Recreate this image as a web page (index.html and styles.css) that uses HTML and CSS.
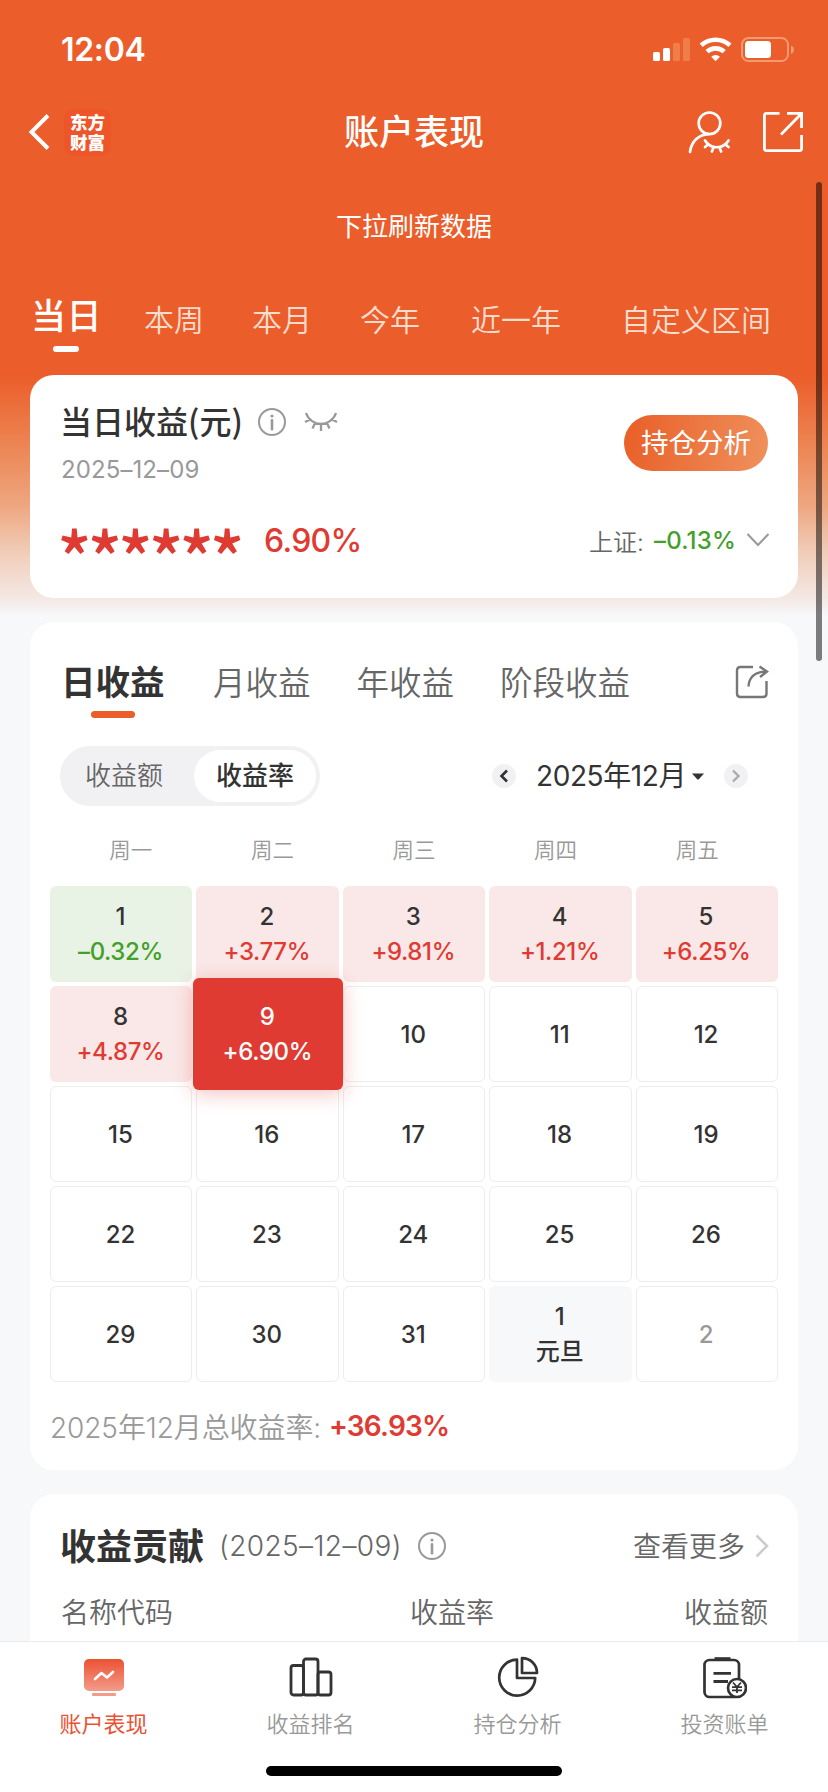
FILE: index.html
```html
<!DOCTYPE html>
<html lang="zh-CN">
<head>
<meta charset="utf-8">
<title>账户表现</title>
<link rel="stylesheet" href="styles.css">
</head>
<body>
<div class="screen">
  <header class="hero">
    <div class="status">
      <span class="time">12:04</span>
      <svg class="status-icons" width="144" height="28" viewBox="0 0 144 28" fill="#fff">
        <rect x="1" y="16" width="7" height="9" rx="1.6"/>
        <rect x="11" y="12" width="7" height="13" rx="1.6"/>
        <rect x="21" y="7" width="7" height="18" rx="1.6" fill="#f07e4a"/>
        <rect x="31" y="2" width="7" height="23" rx="1.6" fill="#f07e4a"/>
        <g fill="none" stroke="#fff" stroke-width="4.6">
          <path d="M49.2 9.3a21.5 21.5 0 0 1 28.8 0"/>
          <path d="M55 15.6a13 13 0 0 1 17.200 0"/>
        </g>
        <path d="M59.200 20.700a6.600 6.600 0 0 1 8.800 0L63.600 25.200z"/>
        <rect x="90" y="2" width="46" height="23" rx="6.500" fill="none" stroke="#f39a70" stroke-width="2"/>
        <rect x="93" y="5" width="26" height="17" rx="3.500"/>
        <path d="M139 9.500c4 1.500 4 7 0 8.500z" fill="#f39a70"/>
      </svg>
    </div>
    <div class="nav">
      <div class="nav-side">
        <svg width="24" height="40" viewBox="0 0 24 40" fill="none" stroke="#fff" stroke-width="4"><path d="M21 3.500 4.500 20 21 36.500"/></svg>
        <span class="logo"><span>东方</span><span>财富</span></span>
      </div>
      <h1 class="nav-title">账户表现</h1>
      <div class="nav-side nav-end">
        <svg width="44" height="44" viewBox="0 0 44 44" fill="none" stroke="#fff" stroke-width="2.700" stroke-linecap="round">
          <circle cx="22.500" cy="13.300" r="10.800"/>
          <path d="M3 42C4.500 31 12 24.500 21.500 24.100M18 30.500C23.500 39.500 36 39.500 41.500 30.500M21 34.500l-3 2.600M26.500 37.500l-1.600 4M32.500 37.500l1.600 4M38.500 34.500l3 2.600"/>
        </svg>
        <svg width="42" height="42" viewBox="0 0 42 42" fill="none" stroke="#fff" stroke-width="2.800">
          <path d="M17.500 2.400H4.400Q2.400 2.400 2.400 4.400V37.600Q2.400 39.600 4.400 39.600H37.600Q39.600 39.600 39.600 37.600V24M25 2.400H39.600V17M39 3 19 23.500"/>
        </svg>
      </div>
    </div>
    <div class="pull">下拉刷新数据</div>
    <nav class="range">
      <span class="range-on">当日</span><span>本周</span><span>本月</span><span>今年</span><span>近一年</span><span>自定义区间</span>
    </nav>
  </header>

  <main class="cards">
    <section class="card summary">
      <div class="sum-top">
        <div>
          <div class="sum-title"><h2>当日收益(元)</h2>
            <svg class="info" width="28" height="28" viewBox="0 0 28 28"><circle cx="14" cy="14" r="13" fill="none" stroke="#999" stroke-width="2"/><circle cx="14" cy="8" r="1.600" fill="#999"/><path d="M14 12.200v9" stroke="#999" stroke-width="2.600" stroke-linecap="round"/></svg>
            <svg width="34" height="22" viewBox="0 0 34 22" fill="none" stroke="#999" stroke-width="2.300"><path d="M2 2C7 16.500 27 16.500 32 2M6 8.500 1 11M11 12 8.500 17.500M17 13v7M23 12l2.500 5.500M28 8.500 33 11"/></svg>
          </div>
          <div class="sum-date">2025–12–09</div>
        </div>
        <button class="pill">持仓分析</button>
      </div>
      <div class="sum-row">
        <span class="stars">******</span><span class="sum-rate">6.90%</span>
        <span class="index-name">上证:</span><span class="index-val">–0.13%</span>
        <svg width="24" height="16" viewBox="0 0 24 16" fill="none" stroke="#999" stroke-width="2"><path d="M1.500 2 12 13 22.500 2"/></svg>
      </div>
    </section>

    <section class="card calendar">
      <div class="tabs">
        <span class="tab-on">日收益</span><span>月收益</span><span>年收益</span><span>阶段收益</span>
        <svg width="34" height="34" viewBox="0 0 34 34" fill="none" stroke="#777" stroke-width="2.400"><path d="M18 2H5.500Q2 2 2 5.500V28.500Q2 32 5.500 32H28Q31.500 32 31.500 28.500V16M13.500 21.500C14 12 20 7 31 6.500M24.500 1.500 32 6.500 25 12"/></svg>
      </div>
      <div class="controls">
        <div class="segment"><span>收益额</span><span class="seg-on">收益率</span></div>
        <div class="month">
          <span class="step"><svg width="10" height="14" viewBox="0 0 10 14" fill="none" stroke="#333" stroke-width="2.600"><path d="M8 1.500 2.500 7 8 12.500"/></svg></span>
          <span class="month-name">2025年12月</span>
          <svg class="caret" width="12" height="7" viewBox="0 0 12 7"><path d="M0 .500H12L7 6Q6 7 5 6Z" fill="#333"/></svg>
          <span class="step"><svg width="10" height="14" viewBox="0 0 10 14" fill="none" stroke="#aaa" stroke-width="2.400"><path d="M2 1.500 7.500 7 2 12.500"/></svg></span>
        </div>
      </div>
      <div class="week"><span>周一</span><span>周二</span><span>周三</span><span>周四</span><span>周五</span></div>
      <div class="grid">
        <div class="day down"><b>1</b><i>–0.32%</i></div><div class="day up"><b>2</b><i>+3.77%</i></div><div class="day up"><b>3</b><i>+9.81%</i></div><div class="day up"><b>4</b><i>+1.21%</i></div><div class="day up"><b>5</b><i>+6.25%</i></div>
        <div class="day up"><b>8</b><i>+4.87%</i></div><div class="day picked"><b>9</b><i>+6.90%</i></div><div class="day"><b>10</b></div><div class="day"><b>11</b></div><div class="day"><b>12</b></div>
        <div class="day"><b>15</b></div><div class="day"><b>16</b></div><div class="day"><b>17</b></div><div class="day"><b>18</b></div><div class="day"><b>19</b></div>
        <div class="day"><b>22</b></div><div class="day"><b>23</b></div><div class="day"><b>24</b></div><div class="day"><b>25</b></div><div class="day"><b>26</b></div>
        <div class="day"><b>29</b></div><div class="day"><b>30</b></div><div class="day"><b>31</b></div><div class="day holiday"><b>1</b><i>元旦</i></div><div class="day muted"><b>2</b></div>
      </div>
      <div class="total"><span class="total-label">2025年12月总收益率:</span><span class="total-val">+36.93%</span></div>
    </section>

    <section class="card contrib">
      <div class="con-top">
        <h2>收益贡献</h2><span class="con-date">(2025–12–09)</span>
        <svg class="info" width="28" height="28" viewBox="0 0 28 28"><circle cx="14" cy="14" r="13" fill="none" stroke="#999" stroke-width="2"/><circle cx="14" cy="8" r="1.600" fill="#999"/><path d="M14 12.200v9" stroke="#999" stroke-width="2.600" stroke-linecap="round"/></svg>
        <span class="more">查看更多</span>
        <svg width="14" height="24" viewBox="0 0 14 24" fill="none" stroke="#ccc" stroke-width="2.600"><path d="M1.500 1.500 12 12 1.500 22.500"/></svg>
      </div>
      <div class="con-head"><span>名称代码</span><span>收益率</span><span>收益额</span></div>
    </section>
  </main>

  <footer class="tabbar">
    <div class="items">
      <div class="item item-on">
        <svg width="44" height="44" viewBox="0 0 44 44"><defs><linearGradient id="g" x1="0" y1="0" x2="0" y2="1"><stop offset="0" stop-color="#ec5133"/><stop offset="1" stop-color="#f39c8a"/></linearGradient></defs><rect x="2" y="3" width="40" height="32" rx="5" fill="url(#g)"/><path d="M13 23 19.500 17 25 21.500 31 16" fill="none" stroke="#fff" stroke-width="2.600" stroke-linecap="round" stroke-linejoin="round"/><rect x="10" y="37" width="24" height="3" rx="1" fill="#f39c8a"/></svg>
        <span>账户表现</span>
      </div>
      <div class="item">
        <svg width="44" height="44" viewBox="0 0 44 44" fill="none" stroke="#333" stroke-width="2.800"><rect x="2" y="9.500" width="12.500" height="29.500" rx="2.500"/><rect x="14.500" y="3" width="14.500" height="36" rx="2.500"/><rect x="29" y="16" width="13" height="23" rx="2.500"/></svg>
        <span>收益排名</span>
      </div>
      <div class="item">
        <svg width="44" height="44" viewBox="0 0 44 44" fill="none" stroke="#333" stroke-width="2.700" stroke-linejoin="round"><path d="M21 3.600A18 18 0 1 0 39.200 22H21Z"/><path d="M26 2.200V17H41C41 8.500 34.500 2.200 26 2.200Z"/></svg>
        <span>持仓分析</span>
      </div>
      <div class="item">
        <svg width="44" height="44" viewBox="0 0 44 44" fill="none" stroke="#333" stroke-width="2.700"><rect x="1.500" y="4" width="34.500" height="37" rx="5"/><path d="M11.500 3H27.500" stroke-width="3.600"/><path d="M10.500 17.300H28M10.500 25.500H25" stroke-width="2.800"/><circle cx="34" cy="32" r="9" fill="#fff"/><path d="M30 26.500 34 31 38 26.500M34 31V37M29 31.200H39M29 34.300H39" stroke-width="1.800"/></svg>
        <span>投资账单</span>
      </div>
    </div>
    <div class="home"></div>
  </footer>
  <div class="scrollbar"></div>
</div>
</body>
</html>
```
FILE: styles.css
```css
* { box-sizing: border-box; margin: 0; padding: 0; }
body { font-family: Inter, "Noto Sans CJK SC", sans-serif; color: #333; background: #f7f8fa; }
svg { display: block; flex: none; }
h1, h2 { font-family: "Noto Sans CJK SC", sans-serif; }
b, i { font-weight: inherit; font-style: normal; }
span, button { white-space: nowrap; }

.screen {
  position: relative; display: flex; flex-direction: column;
  width: 828px; height: 1792px; overflow: hidden;
  background: linear-gradient(180deg, #eb5d2a 0, #eb5d2a 375px, #ec8250 440px, #eea67f 505px, #f1cdb9 553px, #f4e8e4 598px, #f7f8fa 616px);
}
.hero { flex: none; height: 375px; color: #fff; }

.status { display: flex; justify-content: space-between; height: 88px; padding: 36px 32px 0 61px; }
.time { font-size: 32px; line-height: 28px; font-weight: 600; letter-spacing: -.3px; }
.nav { display: flex; align-items: center; height: 88px; padding: 0 24px 0 27px; }
.nav-side { display: flex; align-items: center; width: 200px; gap: 13px; }
.nav-end { justify-content: flex-end; gap: 31px; }
.nav-title { flex: 1; padding: 0 3px 4px 0; text-align: center; font-size: 35px; line-height: 44px; font-weight: 500; }
.logo {
  display: flex; flex-direction: column; align-items: center; justify-content: center;
  width: 47px; height: 47px; border-radius: 10px; background: #ee5528;
  font: 800 17.5px/20px "Noto Sans CJK SC", sans-serif;
}
.pull { height: 102px; text-align: center; font-size: 26px; line-height: 102px; }
.range { display: flex; height: 85px; padding-left: 31px; font-size: 30px; line-height: 84px; color: #fbdccd; font-weight: 350; }
.range span { margin-right: 48px; }
.range span:nth-child(5) { margin-right: 60px; margin-left: 3px; }
.range .range-on { position: relative; margin-right: 42px; font-size: 35px; line-height: 77px; letter-spacing: .5px; color: #fff; font-weight: 500; }
.range-on::after { content: ""; position: absolute; left: 22px; top: 68px; width: 26px; height: 6px; border-radius: 3px; background: #fff; }

.cards { display: flex; flex-direction: column; gap: 24px; padding: 0 30px; }
.card { flex: none; border-radius: 24px; background: #fff; }

.summary { height: 223px; padding: 24px 28px 0 31px; }
.sum-top { display: flex; justify-content: space-between; height: 100px; padding-right: 2px; }
.sum-title { display: flex; align-items: center; height: 46px; }
.sum-title h2 { width: 181px; margin: 0 0 3px -1px; font-size: 32px; line-height: 43px; font-weight: 500; white-space: nowrap; }
.sum-title .info { margin: 0 18px 0 17px; }
.sum-date { font-size: 24px; line-height: 50px; color: #999; font-weight: 400; letter-spacing: .1px; }
.pill { margin-top: 16px; width: 144px; height: 56px; border: 0; border-radius: 28px; background: linear-gradient(100deg, #ea5e27, #ef915c); color: #fff; font: 400 27.5px/52px "Noto Sans CJK SC", sans-serif; padding-bottom: 4px; }
.sum-row { display: flex; align-items: center; height: 82px; }
.stars { width: 207px; height: 82px; margin-left: -4px; font: 500 72px/112px "Noto Sans CJK SC", sans-serif; letter-spacing: -4.3px; color: #df3b33; }
.sum-rate { flex: 1; font-size: 32px; color: #df3b33; font-weight: 500; letter-spacing: -.7px; }
.index-name { width: 65px; font-size: 24px; color: #666; font-weight: 350; }
.index-val { width: 92px; font-size: 24px; color: #43a02a; font-weight: 500; letter-spacing: .2px; }

.calendar { height: 848px; padding: 0 20px; }
.tabs { display: flex; align-items: center; height: 120px; padding: 0 9px 0 11px; font-size: 32.5px; color: #666; font-weight: 350; }
.tabs span { margin-right: 46px; margin-bottom: 4px; }
.tabs .tab-on { position: relative; margin-right: 48.5px; font-size: 34.5px; color: #333; font-weight: 600; }
.tab-on::after { content: ""; position: absolute; left: 50%; bottom: -13px; width: 44px; height: 7px; margin-left: -22px; border-radius: 3.5px; background: #eb5d2a; }
.tabs svg { margin-left: auto; }
.controls { display: flex; align-items: center; justify-content: space-between; height: 68px; padding: 0 30px 0 10px; }
.segment { display: flex; width: 260px; height: 60px; padding: 4px; border-radius: 30px; background: #f1f1f4; font-size: 26px; line-height: 52px; text-align: center; color: #666; font-weight: 350; }
.segment span { width: 120px; }
.segment .seg-on { width: 122px; margin-left: 10px; border-radius: 26px; background: #fff; color: #333; font-weight: 500; }
.month { display: flex; align-items: center; }
.step { display: flex; align-items: center; justify-content: center; width: 24px; height: 24px; border-radius: 50%; background: #f1f1f4; }
.month-name { margin-left: 20px; width: 156px; font-size: 28px; line-height: 40px; letter-spacing: -.4px; }
.caret { margin-right: 20px; }
.week { display: grid; grid-template-columns: repeat(5, 1fr); height: 76px; padding: 4px 10px 0 10px; text-align: center; font-size: 21.500px; line-height: 72px; color: #999; font-weight: 350; }
.grid { display: grid; grid-template-columns: repeat(5, 1fr); grid-auto-rows: 96px; gap: 4px; }
.day { display: flex; flex-direction: column; align-items: center; justify-content: center; padding-right: 1.5px; border: 1px solid #ededed; border-radius: 6px; font-size: 24px; line-height: 35px; font-weight: 500; }
.day i { letter-spacing: -.4px; }
.up { border: 0; background: #fae8e8; }
.up i { color: #df3b33; }
.down { border: 0; background: #e8f3e6; }
.down i { color: #43a02a; }
.picked { z-index: 1; margin: -8px -4px -8px -3px; border: 0; background: #df3b33; color: #fff; box-shadow: 0 4px 20px rgba(223, 59, 51, .3); }
.holiday { border: 0; background: #f7f8fa; }
.holiday i { letter-spacing: 0; }
.muted { color: #999; }
.total { display: flex; align-items: center; height: 88px; font-size: 28px; }
.total-label { width: 279px; color: #999; font-weight: 350; letter-spacing: -.1px; }
.total-val { color: #df3b33; font-weight: 600; letter-spacing: -.8px; }

.contrib { height: 200px; padding: 20px 29px 0 31px; border-radius: 24px 24px 0 0; }
.con-top { display: flex; align-items: center; height: 64px; font-size: 28px; color: #666; font-weight: 350; }
.con-top h2 { width: 159px; margin: 0 0 4px -1px; font-size: 36px; line-height: 50px; color: #333; font-weight: 600; }
.con-date { width: 199px; letter-spacing: .4px; }
.more { margin: 0 10px 3px auto; }
.con-head { display: flex; height: 70px; padding-right: 1px; font-size: 28px; line-height: 70px; color: #666; font-weight: 350; }
.con-head span:first-child { width: 349px; }
.con-head span:last-child { margin-left: auto; }

.tabbar { position: absolute; left: 0; bottom: 0; width: 828px; height: 151px; border-top: 1px solid #ebebeb; background: #fff; }
.items { display: grid; grid-template-columns: repeat(4, 1fr); height: 124px; padding-top: 14px; }
.item { display: flex; flex-direction: column; align-items: center; font-size: 22px; line-height: 32px; color: #999; font-weight: 350; }
.item svg { margin-bottom: 8px; }
.item-on { color: #ec5133; font-weight: 400; }
.home { width: 296px; height: 10px; margin: 0 auto; border-radius: 5px; background: #000; }
.scrollbar { position: absolute; left: 816px; top: 182px; width: 6px; height: 479px; border-radius: 3px; background: rgba(0, 0, 0, .5); }
```
